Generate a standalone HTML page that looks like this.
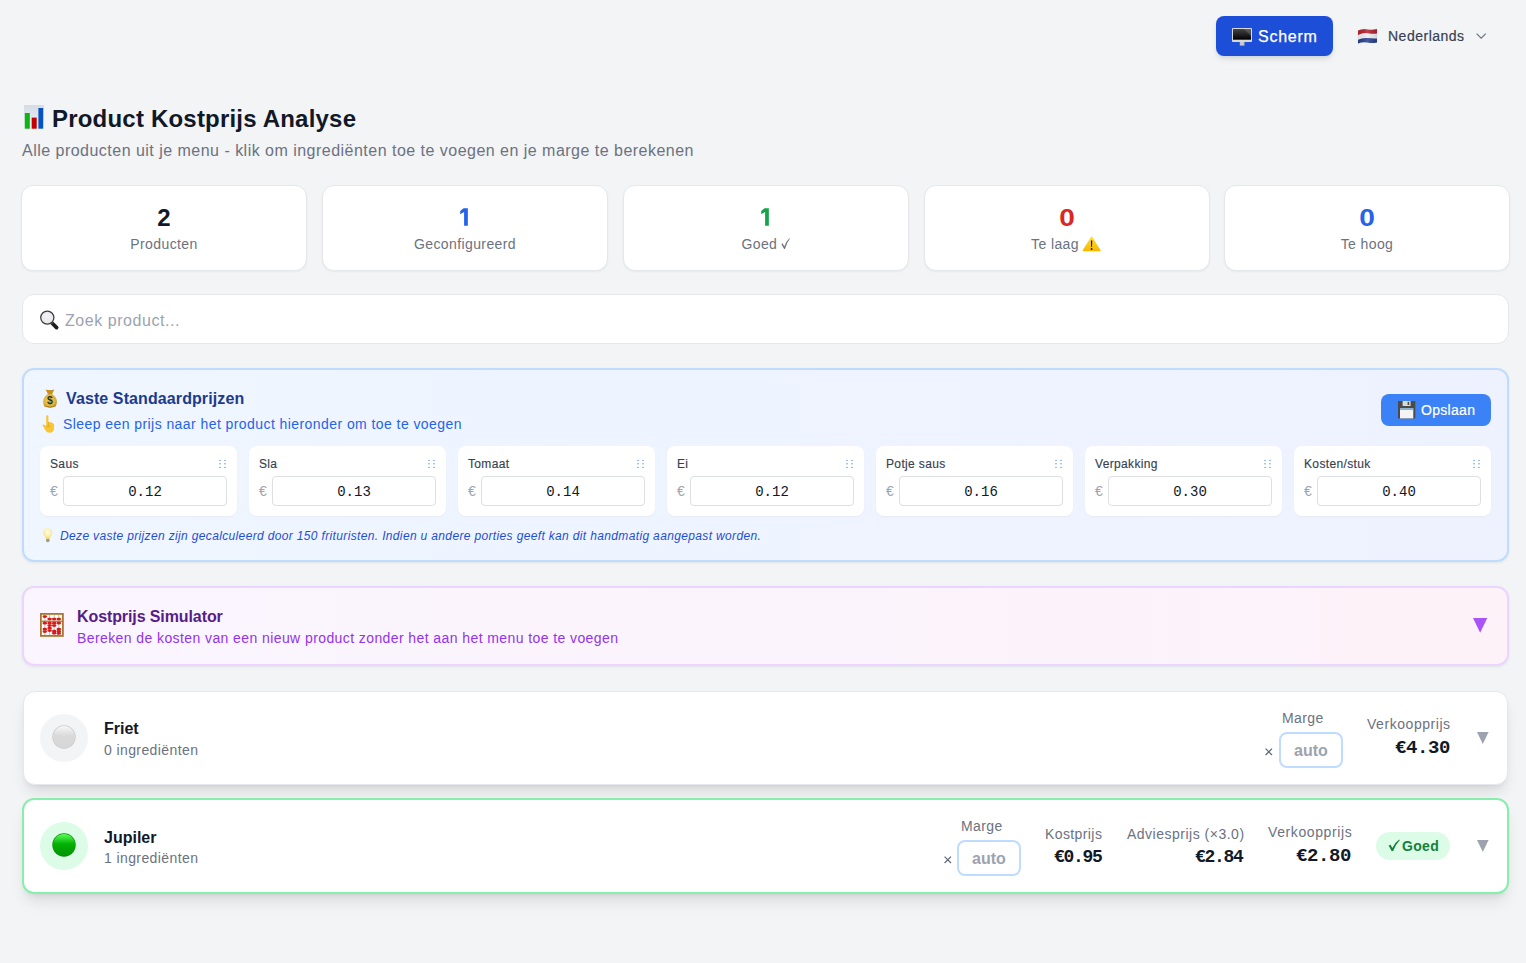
<!DOCTYPE html>
<html><head><meta charset="utf-8">
<style>
*{box-sizing:border-box;margin:0;padding:0}
html,body{width:1526px;height:963px;overflow:hidden;background:#f3f4f6;font-family:"Liberation Sans",sans-serif;color:#111827}
.a{position:absolute;white-space:nowrap}
svg{position:absolute;overflow:visible}
.t16{font-size:16px;line-height:16px;letter-spacing:.45px}
.t14{font-size:14px;line-height:14px;letter-spacing:.4px}
.t12{font-size:12px;line-height:12px;letter-spacing:.3px}
.btn-scherm{left:1216px;top:16px;width:117px;height:40px;background:#1d4ed8;border-radius:8px;box-shadow:0 4px 6px -1px rgba(0,0,0,.1),0 2px 4px -2px rgba(0,0,0,.1)}
.stat{top:185px;width:286px;height:86px;background:#fff;border:1px solid #e5e7eb;border-radius:12px;box-shadow:0 1px 2px rgba(0,0,0,.05)}
.stat .n{position:absolute;left:0;right:0;text-align:center;top:6px;font-size:24px;line-height:24px;font-weight:bold}
.stat .l{position:absolute;left:0;right:0;text-align:center;top:50.5px;color:#6b7280}
.search{left:22px;top:294px;width:1487px;height:50px;background:#fff;border:1px solid #e5e7eb;border-radius:12px}
.vaste{left:22px;top:368px;width:1487px;height:194px;border:2px solid #bfdbfe;border-radius:12px;background:linear-gradient(90deg,#eff6ff,#eef2ff);box-shadow:0 1px 3px rgba(0,0,0,.07)}
.pc{top:446px;width:197px;height:70px;background:#fff;border-radius:8px;box-shadow:0 1px 2px rgba(0,0,0,.04)}
.pc .lb{position:absolute;left:10px;top:12px;font-size:12px;line-height:12px;color:#374151;letter-spacing:.35px;-webkit-text-stroke:.15px #374151}
.pc .eu{position:absolute;left:10px;top:38px;font-size:14px;line-height:14px;color:#9ca3af}
.pc .in{position:absolute;left:23px;top:30px;width:164px;height:30px;border:1px solid #dcdfe4;border-radius:4px;background:#fff;font-family:"Liberation Mono",monospace;font-size:14px;text-align:center;line-height:30px;color:#111827}
.pc svg{left:178.5px;top:13px}
.sim{left:22px;top:586px;width:1487px;height:80px;border:2px solid #e9d5ff;border-radius:12px;background:linear-gradient(90deg,#faf5ff,#fdf2f8);box-shadow:0 1px 3px rgba(0,0,0,.07)}
.prod{left:22px;width:1487px;background:#fff;border-radius:12px}
.mono{font-family:"Liberation Mono",monospace;font-weight:bold;letter-spacing:0}
.gray{color:#6b7280}
</style></head><body>

<!-- header -->
<div class="a btn-scherm"></div>
<svg style="left:1232px;top:28px" width="20" height="18" viewBox="0 0 20 18">
 <defs><linearGradient id="scr" x1="0" y1="0" x2="0" y2="1"><stop offset="0" stop-color="#444"/><stop offset="1" stop-color="#000"/></linearGradient></defs>
 <rect x="0" y="0" width="20" height="14" rx="0.8" fill="#d8d8d8"/>
 <rect x="1" y="1" width="18" height="10.7" fill="url(#scr)"/>
 <polygon points="12,1 19,1 19,8" fill="#fff" opacity=".15"/>
 <rect x="7.8" y="14" width="4.6" height="3.6" fill="#c8c8c8"/>
</svg>
<div class="a t16" style="left:1258px;top:28.5px;color:#fff;letter-spacing:.75px;-webkit-text-stroke:.25px #fff">Scherm</div>

<svg style="left:1357px;top:28px" width="21" height="16" viewBox="0 0 21 16">
 <defs><linearGradient id="fsh" x1="0" y1="0" x2="1" y2="0"><stop offset="0" stop-color="#000" stop-opacity=".05"/><stop offset=".5" stop-color="#fff" stop-opacity=".15"/><stop offset="1" stop-color="#000" stop-opacity=".1"/></linearGradient></defs>
 <path d="M1,2.6 Q5.5,0.4 10.5,1.4 T20,1 V5.8 Q15,6.4 10.5,5.4 T1,7.2Z" fill="#b3222f"/>
 <path d="M1,7.2 Q5.5,4.8 10.5,5.4 T20,5.8 V10.4 Q15,11 10.5,10 T1,11.8Z" fill="#eceef2"/>
 <path d="M1,11.8 Q5.5,9.4 10.5,10 T20,10.4 V14.6 Q15,15.6 10.5,14.6 T1,15.6Z" fill="#253f8a"/>
 <path d="M1,2.6 Q5.5,0.4 10.5,1.4 T20,1 V14.6 Q15,15.6 10.5,14.6 T1,15.6Z" fill="url(#fsh)" stroke="#999" stroke-opacity=".25" stroke-width=".4"/>
</svg>
<div class="a t14" style="left:1388px;top:29.3px;color:#374151;letter-spacing:.5px;-webkit-text-stroke:.2px #374151">Nederlands</div>
<svg style="left:1476px;top:33px" width="11" height="7" viewBox="0 0 11 7"><path d="M0.6,0.6 L5.2,5.2 L9.8,0.6" fill="none" stroke="#6b7280" stroke-width="1.2"/></svg>

<!-- title -->
<svg style="left:24px;top:105px" width="20" height="24" viewBox="0 0 20 24">
 <defs><linearGradient id="bg1" x1="0" y1="0" x2="0" y2="1"><stop offset="0" stop-color="#d5dce6"/><stop offset="1" stop-color="#eef1f5"/></linearGradient></defs>
 <rect x="0" y="0" width="20" height="23.7" fill="url(#bg1)"/>
 <rect x="0.8" y="8" width="5" height="15.7" fill="#0ab515"/>
 <rect x="7.7" y="12.6" width="5" height="11.1" fill="#c40000"/>
 <rect x="14.4" y="3" width="4.8" height="20.7" fill="#0553c2"/>
</svg>
<div class="a" style="left:52px;top:106.5px;font-size:24px;line-height:24px;font-weight:bold;color:#111827;letter-spacing:.2px">Product Kostprijs Analyse</div>
<div class="a t16 gray" style="left:22px;top:143px;letter-spacing:.48px">Alle producten uit je menu - klik om ingrediënten toe te voegen en je marge te berekenen</div>

<!-- stats -->
<div class="a stat" style="left:21px"><div class="n" style="top:19.5px;color:#111827">2</div><div class="l t14">Producten</div></div>
<div class="a stat" style="left:322px"><svg style="left:136px;top:22px" width="10" height="18" viewBox="0 0 10 18"><path d="M4.6,0.2 H8.85 V17.8 H5.1 V3.9 L1.2,6.2 V3.0Z" fill="#2563eb"/></svg><div class="l t14">Geconfigureerd</div></div>
<div class="a stat" style="left:623px"><svg style="left:136px;top:22px" width="10" height="18" viewBox="0 0 10 18"><path d="M4.6,0.2 H8.85 V17.8 H5.1 V3.9 L1.2,6.2 V3.0Z" fill="#16a34a"/></svg><div class="l t14">Goed <span style="display:inline-block;width:9px"></span></div></div>
<div class="a stat" style="left:924px"><div class="n" style="top:19.5px;color:#dc2626;transform:scaleX(1.17)">0</div><div class="l t14" style="left:106px;right:auto;text-align:left">Te laag</div></div>
<div class="a stat" style="left:1224px"><div class="n" style="top:19.5px;color:#2563eb;transform:scaleX(1.17)">0</div><div class="l t14">Te hoog</div></div>
<svg style="left:1082px;top:236px" width="19" height="16" viewBox="0 0 19 16">
 <defs><linearGradient id="wy" x1="0" y1="0" x2="0" y2="1"><stop offset="0" stop-color="#ffdc3c"/><stop offset="1" stop-color="#f6b900"/></linearGradient></defs>
 <path d="M9.6,1.2 L17.9,14.6 H1.3Z" fill="url(#wy)" stroke="url(#wy)" stroke-width="1.4" stroke-linejoin="round"/>
 <path d="M8.9,4.6 H10.3 L10,11 H9.2Z" fill="#1a1a1a"/>
 <circle cx="9.6" cy="13" r=".9" fill="#1a1a1a"/>
</svg>

<svg style="left:780.5px;top:237.5px" width="9" height="11" viewBox="0 0 9 11"><path d="M0.4,5.9 L1.6,5.2 L3.3,8.4 Q5.2,3.2 8.4,0.2 L8.8,0.7 Q6,4.2 3.9,10.9 H3.1Z" fill="#6b7280"/></svg>
<!-- search -->
<div class="a search"></div>
<svg style="left:39px;top:310px" width="20" height="20" viewBox="0 0 20 20">
 <defs><radialGradient id="lens" cx=".45" cy=".4" r=".7"><stop offset="0" stop-color="#f4f4f4"/><stop offset="1" stop-color="#e2e4e8"/></radialGradient></defs>
 <path d="M13,13 L17.6,17.6" stroke="#1e1e1e" stroke-width="3.8" stroke-linecap="round"/>
 <path d="M12.2,12.2 L13.6,13.6" stroke="#555" stroke-width="2.2"/>
 <circle cx="8.3" cy="7.6" r="6.6" fill="url(#lens)" stroke="#3c3c3c" stroke-width="1.25"/>
</svg>
<div class="a t16" style="left:65px;top:312.5px;color:#9ca3af;letter-spacing:.55px">Zoek product...</div>

<!-- vaste standaardprijzen -->
<div class="a vaste"></div>
<svg style="left:43px;top:389px" width="14" height="19" viewBox="0 0 14 19">
 <defs><radialGradient id="bag" cx=".45" cy=".45" r=".65"><stop offset="0" stop-color="#f4d35e"/><stop offset=".7" stop-color="#dcae35"/><stop offset="1" stop-color="#b8861c"/></radialGradient></defs>
 <path d="M2.6,0.4 Q7,1.8 11.4,0.4 L9,5.2 H5Z" fill="#c2932a"/>
 <path d="M5,5 Q0,8 0.1,13.2 Q0.2,18.6 7,18.7 Q13.8,18.6 13.9,13.2 Q14,8 9,5Z" fill="url(#bag)"/>
 <path d="M1,16.8 Q7,19.6 13,16.8" stroke="#a87718" stroke-width=".8" fill="none"/>
 <text x="7" y="15.4" font-family="Liberation Sans" font-weight="bold" font-size="10.5" text-anchor="middle" fill="#333">$</text>
</svg>
<div class="a" style="left:66px;top:390.8px;font-size:16px;line-height:16px;font-weight:bold;color:#1e3a8a;letter-spacing:.1px">Vaste Standaardprijzen</div>
<svg style="left:42px;top:415px" width="13" height="18" viewBox="0 0 13 18">
 <path d="M4.2,1.5 Q4.2,0.2 5.3,0.2 Q6.4,0.2 6.4,1.5 V7 Q10.5,7 11.8,9 Q12.5,11 12,14 Q11.5,17.6 7.5,17.8 Q4.5,17.8 3.6,15.6 L0.6,10.6 Q0.2,9.6 1.2,9.4 Q2.2,9.2 4.2,11 Z" fill="#f8c534"/>
 <path d="M6.4,7 V11 M4.2,11 Q6,12 8,11.5" fill="none" stroke="#d99c1a" stroke-width=".6"/>
</svg>
<div class="a t14" style="left:63px;top:416.5px;color:#2563eb;letter-spacing:.43px">Sleep een prijs naar het product hieronder om toe te voegen</div>

<div class="a" style="left:1381px;top:394px;width:110px;height:32px;background:#3b82f6;border-radius:8px"></div>
<svg style="left:1398px;top:401px" width="18" height="18" viewBox="0 0 18 18">
 <rect x="0" y="0" width="17.3" height="17.4" rx=".6" fill="#4a4a4a"/>
 <rect x="4.6" y="0" width="8" height="5" fill="#d9d9d9"/>
 <rect x="9.6" y="0.8" width="1.6" height="3.2" fill="#4a4a4a"/>
 <rect x="2" y="7.4" width="13.3" height="10" fill="#f4f4f4"/>
 <rect x="2" y="7.4" width="13.3" height="1.6" fill="#79b4e6"/>
</svg>
<div class="a t14" style="left:1421px;top:403px;color:#fff;letter-spacing:.3px;-webkit-text-stroke:.2px #fff">Opslaan</div>
<div class="a pc" style="left:40px"><div class="lb">Saus</div><svg width="8" height="10" viewBox="0 0 8 10"><g fill="#4d8ef8"><circle cx="1" cy="1.4" r=".7"/><circle cx="6" cy="1.4" r=".7"/><circle cx="1" cy="4.7" r=".7"/><circle cx="6" cy="4.7" r=".7"/><circle cx="1" cy="8.4" r=".7"/><circle cx="6" cy="8.4" r=".7"/></g></svg><div class="eu">€</div><div class="in">0.12</div></div>
<div class="a pc" style="left:249px"><div class="lb">Sla</div><svg width="8" height="10" viewBox="0 0 8 10"><g fill="#4d8ef8"><circle cx="1" cy="1.4" r=".7"/><circle cx="6" cy="1.4" r=".7"/><circle cx="1" cy="4.7" r=".7"/><circle cx="6" cy="4.7" r=".7"/><circle cx="1" cy="8.4" r=".7"/><circle cx="6" cy="8.4" r=".7"/></g></svg><div class="eu">€</div><div class="in">0.13</div></div>
<div class="a pc" style="left:458px"><div class="lb">Tomaat</div><svg width="8" height="10" viewBox="0 0 8 10"><g fill="#4d8ef8"><circle cx="1" cy="1.4" r=".7"/><circle cx="6" cy="1.4" r=".7"/><circle cx="1" cy="4.7" r=".7"/><circle cx="6" cy="4.7" r=".7"/><circle cx="1" cy="8.4" r=".7"/><circle cx="6" cy="8.4" r=".7"/></g></svg><div class="eu">€</div><div class="in">0.14</div></div>
<div class="a pc" style="left:667px"><div class="lb">Ei</div><svg width="8" height="10" viewBox="0 0 8 10"><g fill="#4d8ef8"><circle cx="1" cy="1.4" r=".7"/><circle cx="6" cy="1.4" r=".7"/><circle cx="1" cy="4.7" r=".7"/><circle cx="6" cy="4.7" r=".7"/><circle cx="1" cy="8.4" r=".7"/><circle cx="6" cy="8.4" r=".7"/></g></svg><div class="eu">€</div><div class="in">0.12</div></div>
<div class="a pc" style="left:876px"><div class="lb">Potje saus</div><svg width="8" height="10" viewBox="0 0 8 10"><g fill="#4d8ef8"><circle cx="1" cy="1.4" r=".7"/><circle cx="6" cy="1.4" r=".7"/><circle cx="1" cy="4.7" r=".7"/><circle cx="6" cy="4.7" r=".7"/><circle cx="1" cy="8.4" r=".7"/><circle cx="6" cy="8.4" r=".7"/></g></svg><div class="eu">€</div><div class="in">0.16</div></div>
<div class="a pc" style="left:1085px"><div class="lb">Verpakking</div><svg width="8" height="10" viewBox="0 0 8 10"><g fill="#4d8ef8"><circle cx="1" cy="1.4" r=".7"/><circle cx="6" cy="1.4" r=".7"/><circle cx="1" cy="4.7" r=".7"/><circle cx="6" cy="4.7" r=".7"/><circle cx="1" cy="8.4" r=".7"/><circle cx="6" cy="8.4" r=".7"/></g></svg><div class="eu">€</div><div class="in">0.30</div></div>
<div class="a pc" style="left:1294px"><div class="lb">Kosten/stuk</div><svg width="8" height="10" viewBox="0 0 8 10"><g fill="#4d8ef8"><circle cx="1" cy="1.4" r=".7"/><circle cx="6" cy="1.4" r=".7"/><circle cx="1" cy="4.7" r=".7"/><circle cx="6" cy="4.7" r=".7"/><circle cx="1" cy="8.4" r=".7"/><circle cx="6" cy="8.4" r=".7"/></g></svg><div class="eu">€</div><div class="in">0.40</div></div>
<svg style="left:43px;top:528px" width="10" height="16" viewBox="0 0 10 16">
 <defs><radialGradient id="bulb" cx=".5" cy=".35" r=".65"><stop offset="0" stop-color="#fffdf0"/><stop offset=".6" stop-color="#fbeea8"/><stop offset="1" stop-color="#efd46a"/></radialGradient></defs>
 <path d="M4.8,0.3 Q9.3,0.3 9.3,4.8 Q9.3,6.9 7.7,8.6 Q6.7,9.7 6.6,11 H3 Q2.9,9.7 1.9,8.6 Q0.3,6.9 0.3,4.8 Q0.3,0.3 4.8,0.3Z" fill="url(#bulb)"/>
 <path d="M3.1,11 H6.5 V13.2 Q4.8,15.2 3.1,13.2Z" fill="#9a9a9a"/>
</svg>
<div class="a" style="left:60px;top:530px;font-size:12px;line-height:12px;font-style:italic;color:#1d4ed8;letter-spacing:.35px">Deze vaste prijzen zijn gecalculeerd door 150 frituristen. Indien u andere porties geeft kan dit handmatig aangepast worden.</div>

<!-- simulator -->
<div class="a sim"></div>
<svg style="left:40px;top:613px" width="24" height="24" viewBox="0 0 24 24">
 <rect x="0" y="0" width="23.8" height="23.8" fill="#a9782c"/>
 <rect x="1.8" y="1.8" width="20.2" height="20.2" fill="#fafafa"/>
 <rect x="1.8" y="7.6" width="20.2" height="1.3" fill="#a9782c"/>
 <g stroke="#9a7a5a" stroke-width=".5"><line x1="4.8" y1="2" x2="4.8" y2="22"/><line x1="9.6" y1="2" x2="9.6" y2="22"/><line x1="14.2" y1="2" x2="14.2" y2="22"/><line x1="18.8" y1="2" x2="18.8" y2="22"/></g>
 <g fill="#d81a1a"><ellipse cx="4.8" cy="3.6" rx="2.3" ry="1.35"/><ellipse cx="4.8" cy="10.2" rx="2.3" ry="1.35"/><ellipse cx="4.8" cy="16.2" rx="2.3" ry="1.35"/><ellipse cx="4.8" cy="18.6" rx="2.3" ry="1.35"/><ellipse cx="9.6" cy="6" rx="2.3" ry="1.35"/><ellipse cx="9.6" cy="10.2" rx="2.3" ry="1.35"/><ellipse cx="9.6" cy="12.6" rx="2.3" ry="1.35"/><ellipse cx="9.6" cy="15.2" rx="2.3" ry="1.35"/><ellipse cx="9.6" cy="17.6" rx="2.3" ry="1.35"/><ellipse cx="14.2" cy="6" rx="2.3" ry="1.35"/><ellipse cx="14.2" cy="10.2" rx="2.3" ry="1.35"/><ellipse cx="14.2" cy="12.6" rx="2.3" ry="1.35"/><ellipse cx="14.2" cy="18" rx="2.3" ry="1.35"/><ellipse cx="14.2" cy="20.2" rx="2.3" ry="1.35"/><ellipse cx="18.8" cy="6" rx="2.3" ry="1.35"/><ellipse cx="18.8" cy="10.2" rx="2.3" ry="1.35"/><ellipse cx="18.8" cy="16.2" rx="2.3" ry="1.35"/><ellipse cx="18.8" cy="18.4" rx="2.3" ry="1.35"/><ellipse cx="18.8" cy="20.4" rx="2.3" ry="1.35"/></g>
</svg>
<div class="a" style="left:77px;top:608.5px;font-size:16px;line-height:16px;font-weight:bold;color:#581c87;letter-spacing:-.1px">Kostprijs Simulator</div>
<div class="a t14" style="left:77px;top:630.5px;color:#9333ea;letter-spacing:.41px">Bereken de kosten van een nieuw product zonder het aan het menu toe te voegen</div>
<svg style="left:1473px;top:618px" width="15" height="15" viewBox="0 0 15 15"><path d="M0,0 H14.3 L7.15,14.8Z" fill="#a855f7"/></svg>

<!-- product: Friet -->
<div class="a prod" style="left:23px;width:1485px;top:691px;height:94px;border:1px solid #e5e7eb;box-shadow:0 10px 15px -3px rgba(0,0,0,.1),0 4px 6px -4px rgba(0,0,0,.1)"></div>
<div class="a" style="left:40px;top:714px;width:48px;height:48px;border-radius:50%;background:#f3f4f6"></div>
<svg style="left:51.5px;top:725px" width="24" height="24" viewBox="0 0 24 24">
 <defs><linearGradient id="gs" x1="0" y1="0" x2="0" y2="1"><stop offset="0" stop-color="#f7f7f7"/><stop offset=".45" stop-color="#d9d9d9"/><stop offset="1" stop-color="#d6d6d6"/></linearGradient></defs>
 <circle cx="12" cy="12" r="11.7" fill="#c9c9c9"/><circle cx="12" cy="12" r="11" fill="url(#gs)"/>
</svg>
<div class="a" style="left:104px;top:720.5px;font-size:16px;line-height:16px;font-weight:bold;color:#111827">Friet</div>
<div class="a t14 gray" style="left:104px;top:743.4px">0 ingrediënten</div>

<div class="a t14 gray" style="left:1282px;top:711px;letter-spacing:.4px">Marge</div>
<svg style="left:1265px;top:748px" width="8" height="8" viewBox="0 0 8 8"><path d="M0.6,0.6 L7,7 M7,0.6 L0.6,7" stroke="#5b6472" stroke-width="1.15"/></svg>
<div class="a" style="left:1279px;top:732px;width:64px;height:36px;border:2px solid #bfdbfe;border-radius:8px;background:#fff"></div>
<div class="a" style="left:1294px;top:743px;font-size:16px;line-height:16px;font-weight:bold;color:#9ca3af">auto</div>
<div class="a t14 gray" style="left:1367px;top:716.5px;letter-spacing:.55px">Verkoopprijs</div>
<div class="a mono" style="left:1395px;top:739px;font-size:19px;line-height:19px;color:#111827;letter-spacing:-.4px">€4.30</div>
<svg style="left:1477px;top:732px" width="12" height="12" viewBox="0 0 12 12"><path d="M0,0 H11.6 L5.8,12Z" fill="#9ca3af"/></svg>

<!-- product: Jupiler -->
<div class="a prod" style="top:798px;height:96px;border:2px solid #86efac;box-shadow:0 10px 15px -3px rgba(0,0,0,.1),0 4px 6px -4px rgba(0,0,0,.1)"></div>
<div class="a" style="left:40px;top:822px;width:48px;height:48px;border-radius:50%;background:#dcfce7"></div>
<svg style="left:51.5px;top:833px" width="24" height="24" viewBox="0 0 24 24">
 <defs><linearGradient id="gg" x1="0" y1="0" x2="0" y2="1"><stop offset="0" stop-color="#5cff5c"/><stop offset=".45" stop-color="#04b004"/><stop offset="1" stop-color="#009400"/></linearGradient></defs>
 <circle cx="12" cy="12" r="11.7" fill="#088f08"/><circle cx="12" cy="12" r="11" fill="url(#gg)"/>
</svg>
<div class="a" style="left:104px;top:829.5px;font-size:16px;line-height:16px;font-weight:bold;color:#111827">Jupiler</div>
<div class="a t14 gray" style="left:104px;top:851.4px">1 ingrediënten</div>

<div class="a t14 gray" style="left:961px;top:818.5px;letter-spacing:.4px">Marge</div>
<svg style="left:944px;top:856px" width="8" height="8" viewBox="0 0 8 8"><path d="M0.6,0.6 L7,7 M7,0.6 L0.6,7" stroke="#5b6472" stroke-width="1.15"/></svg>
<div class="a" style="left:957px;top:840px;width:64px;height:36px;border:2px solid #bfdbfe;border-radius:8px;background:#fff"></div>
<div class="a" style="left:972px;top:851px;font-size:16px;line-height:16px;font-weight:bold;color:#9ca3af">auto</div>

<div class="a t14 gray" style="left:1045px;top:826.5px">Kostprijs</div>
<div class="a mono" style="left:1054px;top:847.5px;font-size:18px;line-height:18px;color:#111827;letter-spacing:-1.3px">€0.95</div>
<div class="a t14 gray" style="left:1127px;top:826.5px;letter-spacing:.5px">Adviesprijs (×3.0)</div>
<div class="a mono" style="left:1195px;top:847.5px;font-size:18px;line-height:18px;color:#111827;letter-spacing:-1.3px">€2.84</div>
<div class="a t14 gray" style="left:1268px;top:824.5px;letter-spacing:.6px">Verkoopprijs</div>
<div class="a mono" style="left:1296px;top:847px;font-size:19px;line-height:19px;color:#111827;letter-spacing:-.4px">€2.80</div>
<div class="a" style="left:1376px;top:832px;width:74px;height:28px;border-radius:14px;background:#dcfce7"></div>
<svg style="left:1388px;top:839px" width="12" height="13" viewBox="0 0 12 13"><path d="M0.6,6.5 L2.6,5.7 L4.3,8.9 Q6.8,3.4 11.2,0.4 L11.7,1.3 Q7.9,5.2 5.1,11.9 H3.6Z" fill="#15803d"/></svg>
<div class="a" style="left:1402px;top:839px;font-size:14px;line-height:14px;font-weight:bold;color:#15803d;letter-spacing:.3px">Goed</div>
<svg style="left:1477px;top:840px" width="12" height="12" viewBox="0 0 12 12"><path d="M0,0 H11.6 L5.8,12Z" fill="#9ca3af"/></svg>

</body></html>
